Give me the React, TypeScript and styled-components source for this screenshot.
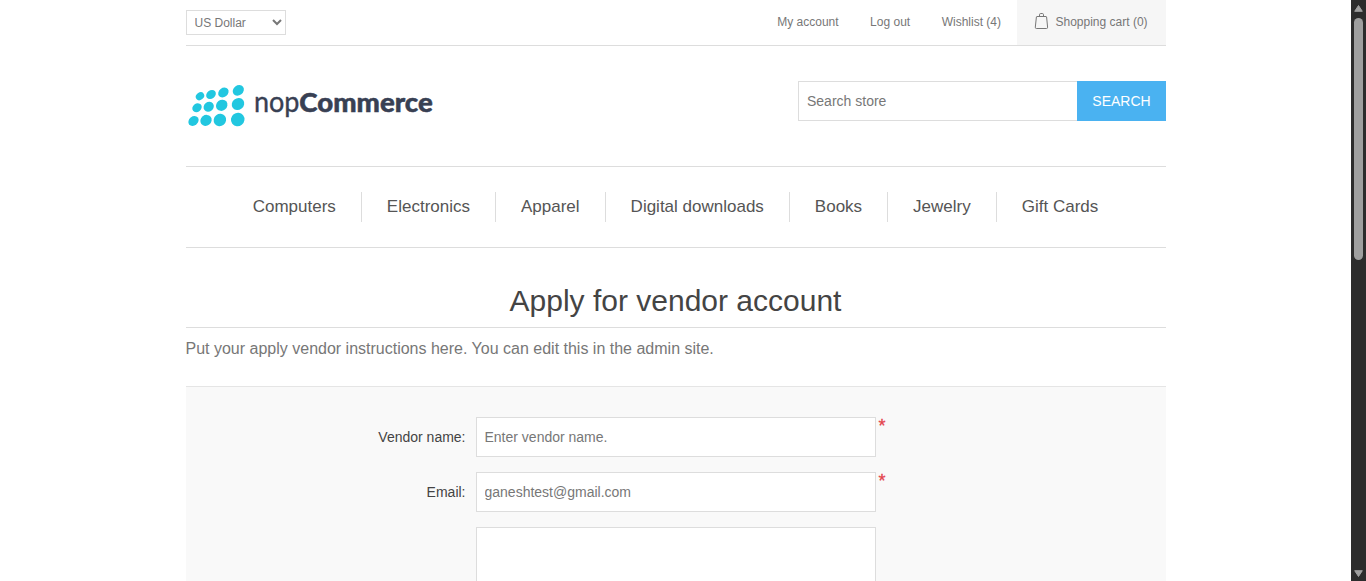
import React from 'react';
import styled, { createGlobalStyle } from 'styled-components';

const GlobalStyle = createGlobalStyle`
  * { box-sizing: border-box; }
  html, body { margin: 0; padding: 0; overflow: hidden; background: #fff; }
  body, input, select, button, textarea { font-family: "Liberation Sans", Arial, sans-serif; }
  body { font-size: 14px; color: #777; }
`;

const Page = styled.div`
  display: flex;
  height: 581px;
  overflow: hidden;
`;

const Content = styled.div`
  flex: 1;
  display: flex;
  flex-direction: column;
  align-items: center;
`;

const Wrapper = styled.div`
  width: 980px;
`;

const TopBar = styled.div`
  display: flex;
  justify-content: space-between;
  height: 46px;
  border-bottom: 1px solid #ddd;
`;

const Currency = styled.select`
  width: 100px;
  height: 25px;
  margin-top: 10px;
  padding: 0 4px;
  border: 1px solid #ddd;
  border-radius: 0;
  background: #fff;
  color: #777;
  font-size: 12px;
`;

const TopLinks = styled.nav`
  display: flex;
  font-size: 12px;
  line-height: 44px;
`;

const TopLink = styled.a<{ $gap: number }>`
  margin-right: ${(p) => p.$gap}px;
  color: #777;
`;

const Cart = styled.a`
  display: flex;
  width: 149px;
  height: 45px;
  padding-left: 17px;
  background: #f6f6f6;
  color: #777;

  svg {
    margin: 12px 7px 0 0;
  }
`;

const Header = styled.header`
  display: flex;
  justify-content: space-between;
  align-items: flex-start;
  height: 121px;
  padding-top: 35px;
  border-bottom: 1px solid #ddd;
`;

const Search = styled.form`
  display: flex;
  width: 368px;
  height: 40px;
`;

const SearchInput = styled.input`
  flex: 1;
  min-width: 0;
  padding: 0 8px 0 8.5px;
  border: 1px solid #ddd;
  border-right: 0;
  font-size: 14px;

  &::placeholder { color: #777; }
`;

const SearchButton = styled.button`
  width: 89px;
  padding: 0 0 0 1px;
  border: 0;
  background: #4ab2f1;
  color: #fff;
  font-size: 14px;
  text-transform: uppercase;
`;

const Menu = styled.nav`
  display: flex;
  justify-content: center;
  align-items: center;
  height: 81px;
  border-bottom: 1px solid #ddd;
`;

const MenuItem = styled.a`
  padding: 0 25px;
  line-height: 30px;
  border-right: 1px solid #ddd;
  color: #555;
  font-size: 17px;

  &:last-child { border-right: 0; }
`;

const Title = styled.h1`
  height: 80px;
  margin: 0;
  padding-top: 30px;
  border-bottom: 1px solid #ddd;
  color: #444;
  font-size: 30px;
  font-weight: 400;
  line-height: 46px;
  text-align: center;
`;

const Intro = styled.p`
  height: 58px;
  margin: 0;
  font-size: 16px;
  line-height: 41px;
`;

const Fieldset = styled.section`
  display: flex;
  flex-direction: column;
  gap: 15px;
  height: 240px;
  padding-top: 30px;
  border-top: 1px solid #e5e5e5;
  background: #f9f9f9;
`;

const Field = styled.div`
  display: flex;
`;

const Label = styled.label`
  width: 280px;
  margin-right: 10px;
  color: #444;
  line-height: 40px;
  text-align: right;
`;

const TextInput = styled.input`
  width: 400px;
  height: 40px;
  padding: 0 8px;
  border: 1px solid #ddd;
  background: #fff;
  color: #777;
  font-size: 14px;

  &::placeholder { color: #777; }
`;

const Description = styled.textarea`
  width: 400px;
  height: 150px;
  margin-left: 290px;
  padding: 8px;
  border: 1px solid #ddd;
  background: #fff;
  resize: none;
`;

const Required = styled.span`
  margin-left: 3px;
  color: #e4434b;
  font-size: 18px;
  line-height: 19px;
  -webkit-text-stroke: 0.3px #e4434b;
`;

const ScrollTrack = styled.div`
  display: flex;
  flex-direction: column;
  align-items: center;
  width: 15px;
  height: 581px;
  background: #2c2c2c;
`;

const ScrollThumb = styled.div`
  width: 9px;
  height: 242px;
  border-radius: 5px;
  background: #9f9f9f;
`;

const ScrollArrow = styled.svg`
  display: block;
  flex: none;

  &:last-child { margin-top: auto; }
`;

const dots = [
  [20, 20.2, 4.5, 3.6], [31, 18.5, 5.2, 4.2], [43.4, 16.5, 5.6, 4.5], [58.3, 14.4, 6, 4.9],
  [17, 31.7, 5, 4.2], [28.7, 30.7, 5.4, 4.7], [41.7, 29.3, 6, 5.3], [58, 28, 6.5, 5.8],
  [13.5, 45, 5.5, 4.5], [26, 44.4, 5.9, 5.3], [39.9, 44, 6.4, 6], [57.7, 43.5, 6.9, 6.6],
];

const LogoImage = styled.svg`
  display: block;
  overflow: visible;
`;

const Logo = () => (
  <LogoImage width="260" height="50" viewBox="0 0 260 50">
    <g fill="#22c7e0">
      {dots.map(([x, y, rx, ry], i) => (
        <ellipse key={i} cx={x - 6} cy={y - 5} rx={rx} ry={ry} transform={`rotate(-38 ${x - 6} ${y - 5})`} />
      ))}
    </g>
    <g fill="#384053" stroke="#384053" fontFamily="Lato, sans-serif">
      <text x="68" y="31" fontSize="28" strokeWidth="0.35" textLength="45.5" lengthAdjust="spacingAndGlyphs">nop</text>
      <text x="113.3" y="31" fontSize="27" fontWeight="900" strokeWidth="0.5" textLength="133.5" lengthAdjust="spacingAndGlyphs">Commerce</text>
    </g>
  </LogoImage>
);

const BagIcon = () => (
  <svg width="15" height="18" viewBox="0 0 15 18" fill="none" stroke="#777">
    <path d="M3 4.5h9q.5 0 .6.5l1 10.2q.1 1.3-1 1.3H2.3q-1.1 0-1-1.3L2.4 5q.1-.5.6-.5zM5.5 4.5V2.7Q5.5 1.5 6.7 1.5h1.6q1.2 0 1.2 1.2v1.8" />
  </svg>
);

const categories = ['Computers', 'Electronics', 'Apparel', 'Digital downloads', 'Books', 'Jewelry', 'Gift Cards'];

export default function App() {
  return (
    <>
      <GlobalStyle />
      <Page>
        <Content>
          <Wrapper>
            <TopBar>
              <Currency defaultValue="usd">
                <option value="usd">US Dollar</option>
              </Currency>
              <TopLinks>
                <TopLink $gap={31.5}>My account</TopLink>
                <TopLink $gap={31.5}>Log out</TopLink>
                <TopLink $gap={15.5}>Wishlist (4)</TopLink>
                <Cart>
                  <BagIcon />
                  Shopping cart (0)
                </Cart>
              </TopLinks>
            </TopBar>
            <Header>
              <Logo />
              <Search>
                <SearchInput placeholder="Search store" />
                <SearchButton type="button">Search</SearchButton>
              </Search>
            </Header>
            <Menu>
              {categories.map((name) => (
                <MenuItem key={name}>{name}</MenuItem>
              ))}
            </Menu>
            <Title>Apply for vendor account</Title>
            <Intro>Put your apply vendor instructions here. You can edit this in the admin site.</Intro>
            <Fieldset>
              <Field>
                <Label>Vendor name:</Label>
                <TextInput placeholder="Enter vendor name." />
                <Required>*</Required>
              </Field>
              <Field>
                <Label>Email:</Label>
                <TextInput defaultValue="ganeshtest@gmail.com" />
                <Required>*</Required>
              </Field>
              <Description />
            </Fieldset>
          </Wrapper>
        </Content>
        <ScrollTrack>
          <ScrollArrow width="15" height="18" viewBox="0 0 15 18">
            <path d="M7.5 5.5L11.3 11.3H3.7z" fill="#9f9f9f" stroke="#9f9f9f" strokeLinejoin="round" />
          </ScrollArrow>
          <ScrollThumb />
          <ScrollArrow width="15" height="18" viewBox="0 0 15 18">
            <path d="M7.5 13.5L11.3 7.7H3.7z" fill="#9f9f9f" stroke="#9f9f9f" strokeLinejoin="round" />
          </ScrollArrow>
        </ScrollTrack>
      </Page>
    </>
  );
}
